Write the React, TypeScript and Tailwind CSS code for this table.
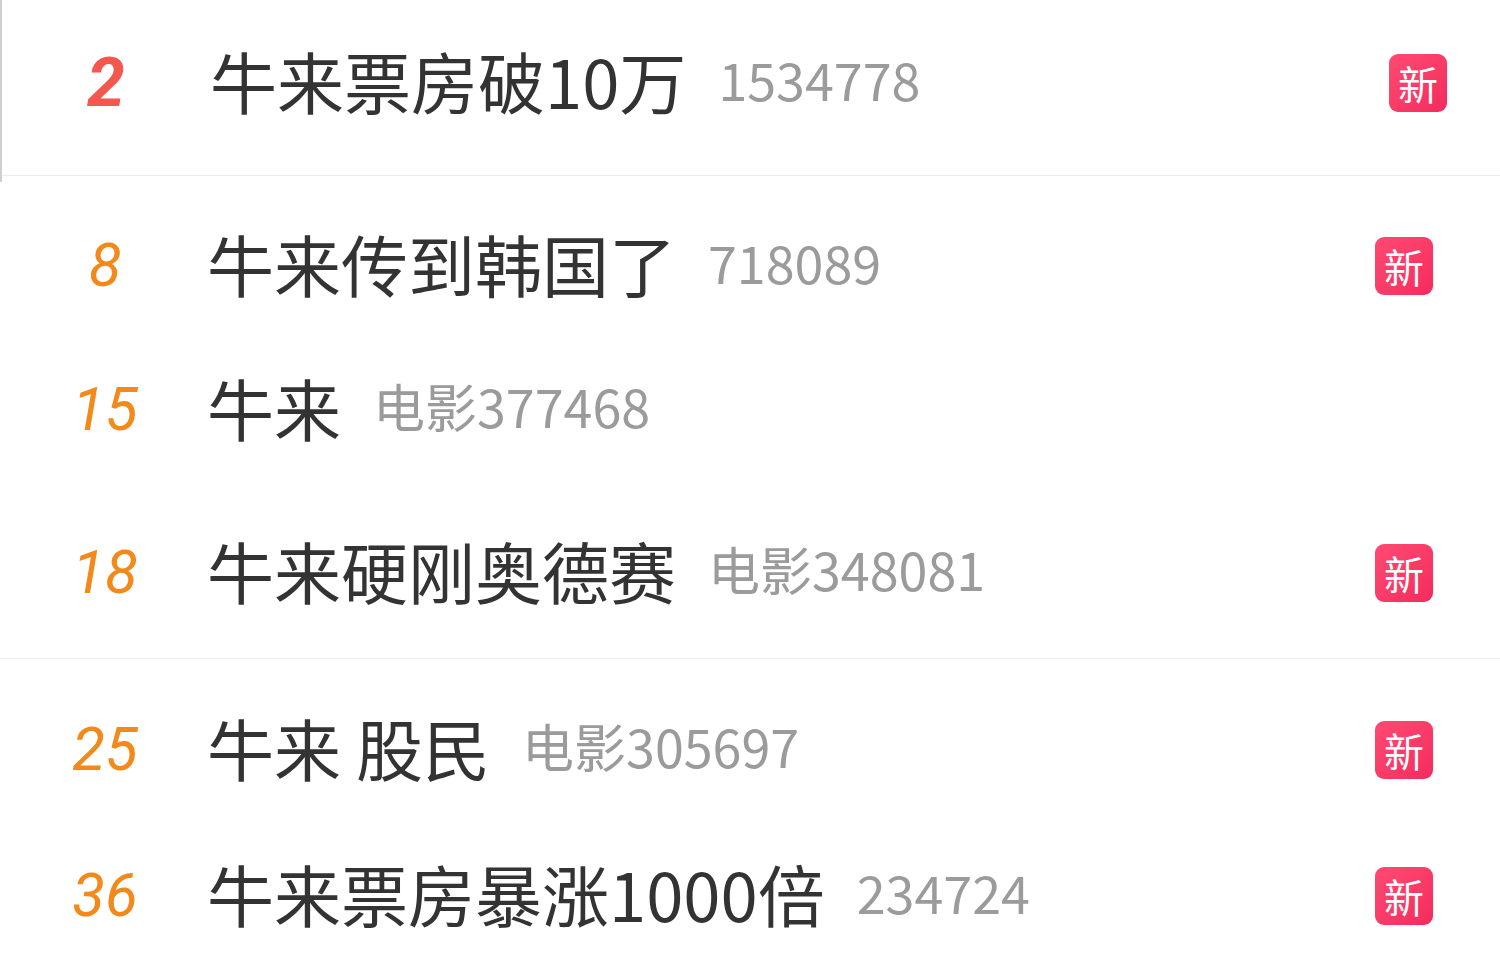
import React from "react";

interface RowProps {
  rank: string;
  title: string;
  count: string;
  isNew?: boolean;
  top?: boolean;
}

const cjk = { fontFamily: '"Noto Sans CJK SC", "Noto Sans", sans-serif' };

const Badge = () => (
  <div
    className="w-[58px] h-[58px] rounded-[9px] bg-gradient-to-br from-[#ff4a72] to-[#f42a5e] flex items-center justify-center text-white text-[40px] leading-none"
    style={cjk}
  >
    新
  </div>
);

const Row: React.FC<RowProps & { className: string }> = ({ rank, title, count, isNew = true, top, className }) => {
  return (
    <div className={`flex items-center ${className}`}>
      <div
        className={
          top
            ? "w-[208px] text-center italic font-bold text-[68px] leading-none text-[#f4574e]"
            : "w-[210px] text-center italic text-[60px] leading-none text-[#f3891a]"
        }
        style={{ fontFamily: "Roboto, Arial, sans-serif" }}
      >
        {rank}
      </div>
      <div className={`flex items-center flex-1 min-w-0 mb-[8px] ${top ? "" : "-ml-[3px]"}`} style={cjk}>
        <span className="text-[67px] leading-none text-[#333333] whitespace-nowrap">{title}</span>
        <span className="ml-[32px] text-[52px] leading-none text-[#9b9b9b] whitespace-nowrap">{count}</span>
      </div>
      {isNew && (
        <div className={top ? "mr-[53px]" : "mr-[67px]"}>
          <Badge />
        </div>
      )}
    </div>
  );
};

export default function App() {
  return (
    <div className="w-[1500px] h-[967px] bg-white overflow-hidden">
      <div className="border-l-2 border-[#cfcfcf]">
        <div className="h-[176px] border-b border-[#ececec]">
          <Row top rank="2" title="牛来票房破10万" count="1534778" className="h-[166px]" />
        </div>
        <div className="h-[6px]" />
      </div>
      <div className="border-b border-[#eeeeee]">
        <Row rank="8" title="牛来传到韩国了" count="718089" className="h-[168px]" />
        <Row rank="15" title="牛来" count="电影377468" isNew={false} className="h-[120px]" />
        <Row rank="18" title="牛来硬刚奥德赛" count="电影348081" className="h-[170px] mt-[18px]" />
      </div>
      <Row rank="25" title="牛来 股民" count="电影305697" className="h-[182px]" />
      <Row rank="36" title="牛来票房暴涨1000倍" count="234724" className="h-[110px]" />
    </div>
  );
}
